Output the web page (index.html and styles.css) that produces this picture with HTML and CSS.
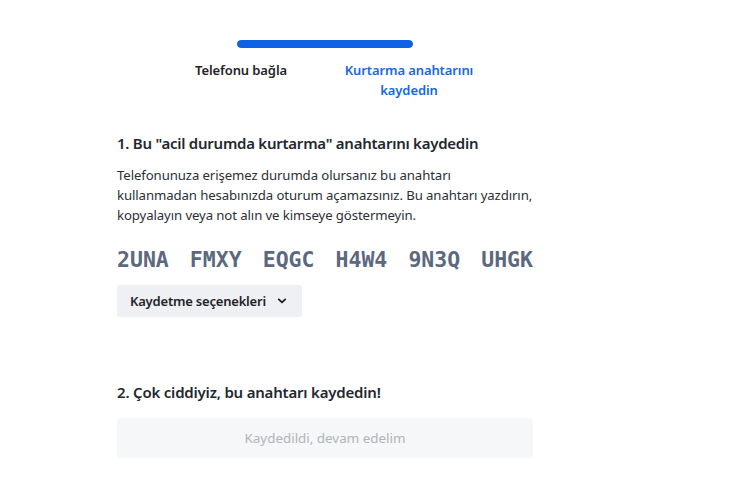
FILE: index.html
```html
<!DOCTYPE html>
<html lang="tr">
<head>
<meta charset="utf-8">
<link rel="stylesheet" href="styles.css">
</head>
<body>
<main class="page">
  <div class="stepper">
    <div class="track"><div class="fill"></div></div>
    <div class="steps">
      <div class="step">Telefonu bağla</div>
      <div class="step active">Kurtarma anahtarını kaydedin</div>
    </div>
  </div>

  <h2 class="title first">1. Bu "acil durumda kurtarma" anahtarını kaydedin</h2>
  <p class="desc">Telefonunuza erişemez durumda olursanız bu anahtarı<br>kullanmadan hesabınızda oturum açamazsınız. Bu anahtarı yazdırın,<br>kopyalayın veya not alın ve kimseye göstermeyin.</p>

  <div class="codes">
    <span>2UNA</span><span>FMXY</span><span>EQGC</span><span>H4W4</span><span>9N3Q</span><span>UHGK</span>
  </div>

  <button class="options">Kaydetme seçenekleri
    <svg width="10" height="10" viewBox="0 0 10 10"><path d="M1.8 3.4 L5 6.4 L8.2 3.4" fill="none" stroke="#1f2328" stroke-width="1.9" stroke-linecap="round" stroke-linejoin="round"/></svg>
  </button>

  <h2 class="title second">2. Çok ciddiyiz, bu anahtarı kaydedin!</h2>
  <button class="continue" disabled>Kaydedildi, devam edelim</button>
</main>
</body>
</html>
```
FILE: styles.css
```css
* { box-sizing: border-box; }
body {
  margin: 0;
  background: #ffffff;
  font-family: "Noto Sans", "Open Sans", sans-serif;
  color: #1f2328;
}
.page {
  width: 416px;
  margin-left: 117px;
  padding-top: 40px;
}
.stepper {
  display: flex;
  flex-direction: column;
  align-items: center;
}
.track {
  width: 176px;
  height: 8px;
  border-radius: 4px;
  background: #e4e7eb;
  overflow: hidden;
}
.fill {
  width: 100%;
  height: 100%;
  background: #0f62e5;
  border-radius: 4px;
}
.steps {
  display: flex;
  width: 336px;
  margin-top: 12px;
}
.step {
  flex: 1;
  text-align: center;
  font-size: 13px;
  font-weight: 600;
  line-height: 20px;
  color: #1f2328;
  letter-spacing: -0.1px;
}
.step.active { color: #1668e3; }
.title {
  margin: 31px 0 0;
  font-size: 15px;
  font-weight: 600;
  line-height: 24px;
  letter-spacing: -0.2px;
  color: #23272e;
}
.title.first { letter-spacing: -0.25px; }
.desc {
  margin: 10px 0 0;
  font-size: 13.2px;
  line-height: 20px;
  letter-spacing: -0.1px;
  color: #2b2f36;
}
.codes {
  display: flex;
  justify-content: space-between;
  margin-top: 20px;
  font-family: "DejaVu Sans Mono", "Liberation Mono", monospace;
  font-weight: bold;
  font-size: 21.5px;
  line-height: 30px;
  color: #5b687e;
}
.options {
  display: flex;
  align-items: center;
  gap: 11px;
  margin-top: 10px;
  height: 32px;
  padding: 0 15px 0 13px;
  border: none;
  border-radius: 3px;
  background: #eef0f3;
  font-family: inherit;
  font-size: 13px;
  font-weight: 600;
  letter-spacing: -0.2px;
  color: #1f2328;
}
.title.second { margin-top: 63px; }
.continue {
  display: block;
  width: 100%;
  height: 40px;
  margin-top: 14px;
  border: none;
  border-radius: 3px;
  background: #f6f7f8;
  font-family: inherit;
  font-size: 13.4px;
  color: #b0b4ba;
}
```
